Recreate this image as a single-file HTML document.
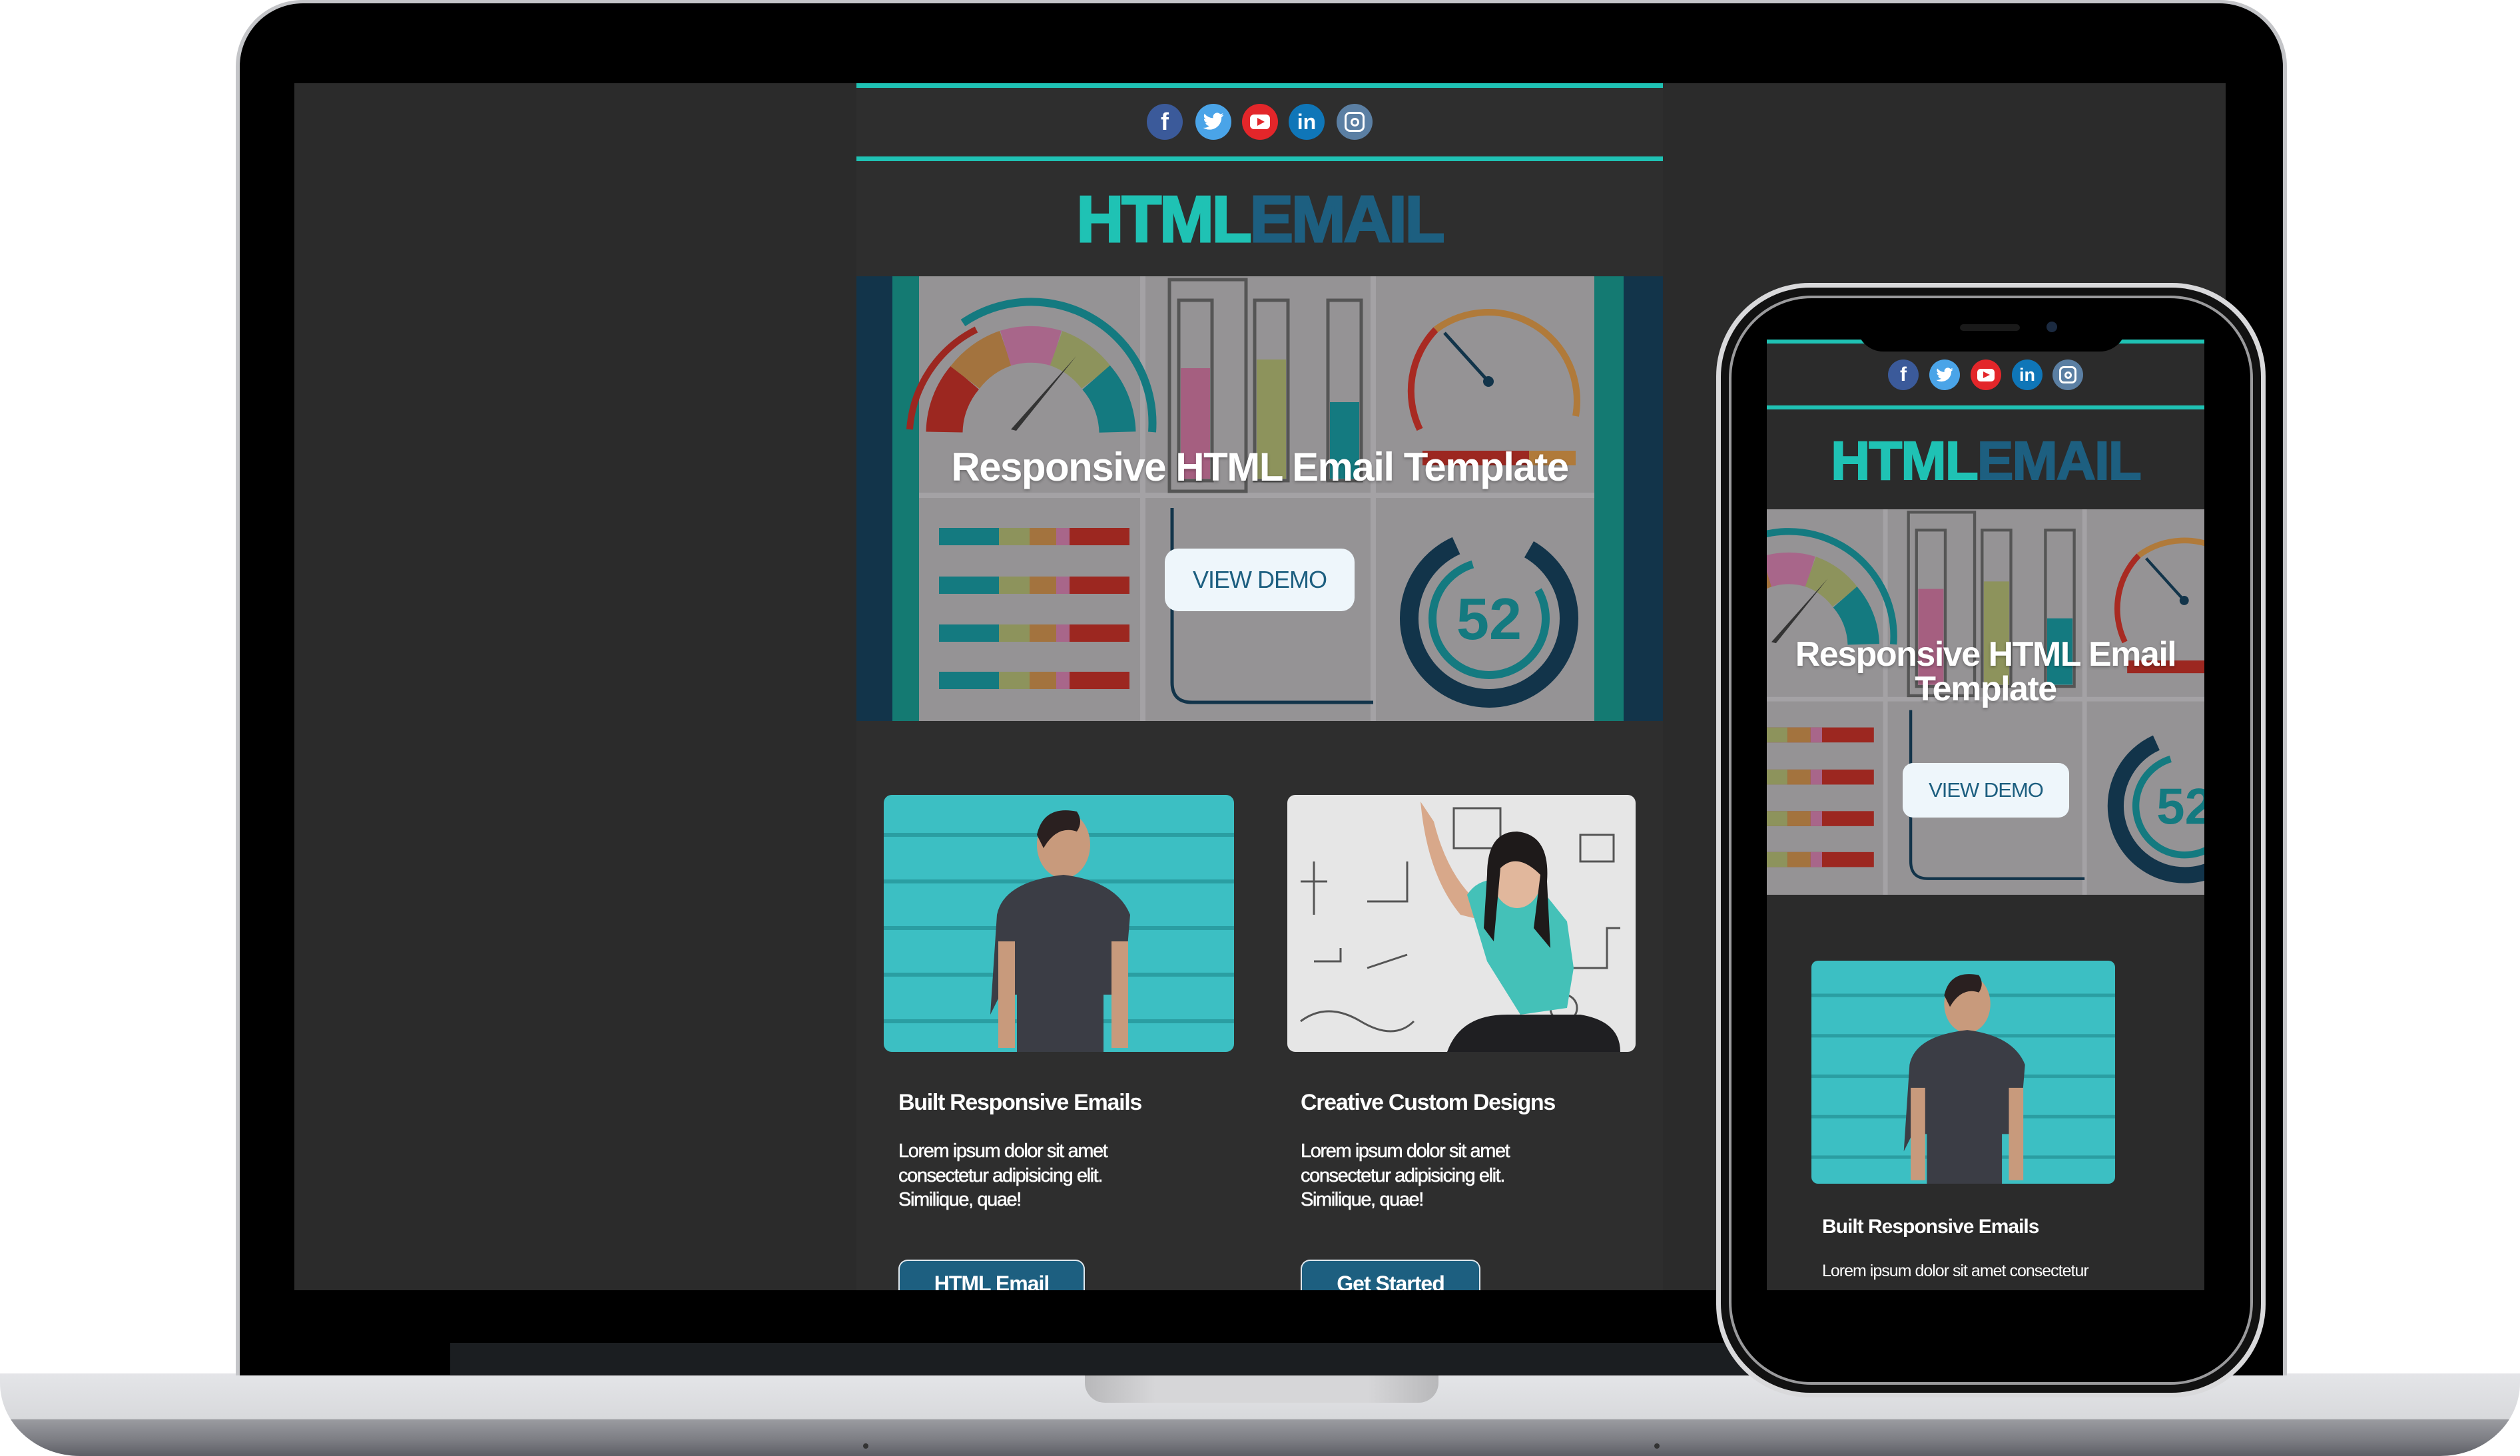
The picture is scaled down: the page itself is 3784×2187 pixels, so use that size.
<!DOCTYPE html>
<html><head><meta charset="utf-8">
<style>
*{margin:0;padding:0;box-sizing:border-box}
html,body{width:3784px;height:2187px;background:#fff;overflow:hidden;font-family:"Liberation Sans",sans-serif}
.abs{position:absolute}
.line{position:absolute;background:#1fc2b4}
.ic{position:absolute;border-radius:50%;color:#fff;font-weight:bold;text-align:center;display:flex;align-items:center;justify-content:center}
.t{color:#fff;font-weight:bold}
</style></head><body>

<!-- laptop base -->
<div class="abs" style="left:0;top:2063px;width:3784px;height:124px;border-radius:0 0 120px 120px/0 0 110px 110px;background:linear-gradient(#e4e5e8 0,#d8d9dc 55%,#9a9ba0 56%,#7d7e84 80%,#5e5f66 100%)"></div>
<div class="abs" style="left:1629px;top:2063px;width:531px;height:44px;border-radius:0 0 30px 30px;background:linear-gradient(90deg,#b8b8ba,#d6d6d8 20%,#d6d6d8 80%,#b8b8ba)"></div>
<div class="abs" style="left:1296px;top:2168px;width:8px;height:8px;border-radius:50%;background:#333"></div>
<div class="abs" style="left:2484px;top:2168px;width:8px;height:8px;border-radius:50%;background:#333"></div>

<!-- laptop lid -->
<div class="abs" style="left:354px;top:0;width:3080px;height:2066px;border-radius:100px 100px 0 0;background:#c4c5c8"></div>
<div class="abs" style="left:360px;top:5px;width:3068px;height:2061px;border-radius:95px 95px 0 0;background:#000"></div>
<div class="abs" style="left:676px;top:2017px;width:2437px;height:48px;background:#1b1e21"></div>

<!-- screen -->
<div class="abs" style="left:442px;top:125px;width:2900px;height:1813px;background:#2b2b2b;overflow:hidden">
  <div class="abs" style="left:844px;top:0;width:1211px;height:1813px;background:#2e2e2e">
    <div class="line" style="left:0;top:0;width:1211px;height:7px"></div>
    <div class="line" style="left:0;top:110px;width:1211px;height:7px"></div>
    <div class="ic" style="left:436px;top:31px;width:54px;height:54px;background:#3b5a9a;font-size:36px">f</div>
    <div class="ic" style="left:509px;top:31px;width:54px;height:54px;background:#4aa4e8;font-size:30px">
      <svg width="34" height="28" viewBox="0 0 24 20"><path d="M23 2.5c-.8.4-1.7.6-2.6.7a4.5 4.5 0 0 0 2-2.5c-.9.5-1.9.9-2.9 1.1A4.5 4.5 0 0 0 11.8 6 12.8 12.8 0 0 1 2.5 1.3a4.5 4.5 0 0 0 1.4 6 4.5 4.5 0 0 1-2-.6 4.5 4.5 0 0 0 3.6 4.5 4.5 4.5 0 0 1-2 .1 4.5 4.5 0 0 0 4.2 3.1A9 9 0 0 1 1 16.3 12.8 12.8 0 0 0 20.7 5.5V5c.9-.6 1.7-1.4 2.3-2.5z" fill="#fff"/></svg></div>
    <div class="ic" style="left:579px;top:31px;width:54px;height:54px;background:#e3262a"><div style="width:30px;height:22px;background:#fff;border-radius:6px;position:relative"><div style="position:absolute;left:11px;top:5px;border-left:11px solid #e3262a;border-top:6px solid transparent;border-bottom:6px solid transparent"></div></div></div>
    <div class="ic" style="left:649px;top:31px;width:54px;height:54px;background:#0f76b8;font-size:32px">in</div>
    <div class="ic" style="left:721px;top:31px;width:54px;height:54px;background:#5b7fa3"><div style="width:30px;height:30px;border:3px solid #fff;border-radius:8px;display:flex;align-items:center;justify-content:center"><div style="width:13px;height:13px;border:3px solid #fff;border-radius:50%"></div></div></div>
    <div class="abs" style="left:0;top:149px;width:1211px;text-align:center;font-size:98px;font-weight:900;letter-spacing:-3px;line-height:110px;-webkit-text-stroke:3px"><span style="color:#1fc2b4">HTML</span><span style="color:#1d5f80">EMAIL</span></div>
    <!-- hero -->
    <div class="abs" style="left:0;top:290px;width:1211px;height:668px">
      <svg width="1211" height="668" viewBox="0 0 1211 668" style="position:absolute;left:0;top:0">
        <g id="hero">
        <rect width="1211" height="668" fill="#959395"/>
        <rect x="0" width="54" height="668" fill="#12344a"/><rect x="54" width="40" height="668" fill="#147a72"/>
        <rect x="1108" width="44" height="668" fill="#147a72"/><rect x="1152" width="59" height="668" fill="#12344a"/>
        <g stroke="#a4a2a5" stroke-width="8"><line x1="430" y1="0" x2="430" y2="668"/><line x1="776" y1="0" x2="776" y2="668"/><line x1="94" y1="329" x2="1108" y2="329"/></g>
        <g fill="none" stroke-width="55">
          <path d="M132 234 A130 130 0 0 1 163 152" stroke="#9c2720"/>
          <path d="M163 152 A130 130 0 0 1 224 108" stroke="#a3733e"/>
          <path d="M224 108 A130 130 0 0 1 300 108" stroke="#a8668a"/>
          <path d="M300 108 A130 130 0 0 1 360 152" stroke="#8d935c"/>
          <path d="M360 152 A130 130 0 0 1 392 234" stroke="#147a80"/>
        </g>
        <path d="M80 230 A182 182 0 0 1 180 80" fill="none" stroke="#9c2720" stroke-width="10"/>
        <path d="M160 70 A182 182 0 0 1 444 234" fill="none" stroke="#147a80" stroke-width="12"/>
        <path d="M232 230 L330 120 L240 232z" fill="#333"/>
        <g stroke="#555" stroke-width="5" fill="none"><rect x="484" y="36" width="50" height="271"/><rect x="598" y="36" width="50" height="271"/><rect x="708" y="36" width="50" height="271"/><rect x="470" y="5" width="115" height="318"/></g>
        <rect x="487" y="138" width="44" height="166" fill="#a55f80"/>
        <rect x="601" y="125" width="44" height="179" fill="#8d935c"/>
        <rect x="711" y="189" width="44" height="115" fill="#147a80"/>
        <path d="M846 230 A133 133 0 0 1 870 80" fill="none" stroke="#a82a22" stroke-width="10"/>
        <path d="M870 80 A133 133 0 0 1 1080 210" fill="none" stroke="#b07a3a" stroke-width="10"/>
        <line x1="883" y1="85" x2="949" y2="158" stroke="#12344a" stroke-width="5"/><circle cx="949" cy="158" r="8" fill="#12344a"/>
        <rect x="850" y="262" width="230" height="22" fill="#9c2720"/><rect x="1010" y="262" width="70" height="22" fill="#b07a3a"/>
        <g>
          <g id="bar"><rect x="124" y="378" width="286" height="26" fill="#9c2720"/><rect x="124" y="378" width="90" height="26" fill="#147a80"/><rect x="214" y="378" width="46" height="26" fill="#8d935c"/><rect x="260" y="378" width="40" height="26" fill="#a3733e"/><rect x="300" y="378" width="20" height="26" fill="#a8668a"/></g>
          <use href="#bar" y="73"/><use href="#bar" y="145"/><use href="#bar" y="216"/>
        </g>
        <path d="M474 348 L474 610 Q474 640 504 640 L776 640" fill="none" stroke="#12344a" stroke-width="5"/>
        <circle cx="950" cy="514" r="120" fill="none" stroke="#12344a" stroke-width="28" stroke-dasharray="640 160" transform="rotate(-60 950 514)"/>
        <circle cx="950" cy="514" r="85" fill="none" stroke="#147a80" stroke-width="12" stroke-dasharray="420 120" transform="rotate(-30 950 514)"/>
        <text x="950" y="545" text-anchor="middle" font-family="Liberation Sans" font-weight="bold" font-size="88" fill="#147a80">52</text>
        </g>
      </svg>
      <div class="abs t" style="left:0;top:252px;width:1211px;text-align:center;font-size:60px;letter-spacing:-1.5px;text-shadow:0 2px 4px rgba(0,0,0,.3)">Responsive HTML Email Template</div>
      <div class="abs" style="left:463px;top:409px;width:285px;height:94px;background:#eef6fb;border-radius:20px;color:#1d5f80;font-size:36px;text-align:center;line-height:94px;letter-spacing:-1px">VIEW DEMO</div>
    </div>
    <!-- cards -->
    <div class="abs" style="left:41px;top:1069px;width:526px;height:386px;border-radius:12px;overflow:hidden;background:#3cbfc3">
      <svg width="526" height="386"><g stroke="#2a9ea2" stroke-width="6"><line x1="0" y1="60" x2="526" y2="60"/><line x1="0" y1="130" x2="526" y2="130"/><line x1="0" y1="200" x2="526" y2="200"/><line x1="0" y1="270" x2="526" y2="270"/><line x1="0" y1="340" x2="526" y2="340"/></g>
      <ellipse cx="270" cy="75" rx="40" ry="50" fill="#c89a7c"/><path d="M230 60 Q240 15 290 25 Q300 40 290 55 Q260 45 240 80z" fill="#2a2020"/>
      <path d="M160 330 L170 180 Q180 130 270 120 Q350 130 370 180 L360 300 L330 300 L330 386 L200 386 L200 300 L175 300z" fill="#3b3d45"/>
      <rect x="172" y="220" width="25" height="160" fill="#c89a7c"/><rect x="342" y="220" width="25" height="160" fill="#c89a7c"/></svg>
    </div>
    <div class="abs" style="left:647px;top:1069px;width:523px;height:386px;border-radius:12px;overflow:hidden;background:#e6e6e6">
      <svg width="523" height="386"><g stroke="#555" stroke-width="3" fill="none"><rect x="250" y="20" width="70" height="60"/><path d="M20 130 L60 130 M40 100 L40 180"/><path d="M120 160 L180 160 L180 100"/><circle cx="415" cy="320" r="20"/><path d="M390 260 L480 260 L480 200 L500 200"/><path d="M40 250 l40 0 l0 -20 M120 260 l60 -20"/><path d="M20 340 q40 -30 90 0 t80 0"/><rect x="440" y="60" width="50" height="40"/><path d="M340 100 l40 40"/></g>
      <path d="M220 40 Q240 120 285 160 L300 190 L260 180 Q210 120 200 10z" fill="#d8a88a"/>
      <path d="M270 150 Q290 120 330 130 L380 140 L420 190 L430 260 L420 320 L350 330 L300 250z" fill="#44c1b8"/>
      <ellipse cx="345" cy="120" rx="38" ry="50" fill="#e1b79c"/><path d="M300 120 Q300 55 345 55 Q395 60 390 130 L395 230 L370 200 L380 120 Q345 85 320 110 L310 220 L295 200z" fill="#1e1a1a"/>
      <path d="M240 386 Q260 330 330 330 L440 330 Q500 340 500 386z" fill="#1f1f22"/></svg>
    </div>
    <div class="abs t" style="left:63px;top:1512px;font-size:34px;letter-spacing:-1.3px">Built Responsive Emails</div>
    <div class="abs t" style="left:667px;top:1512px;font-size:34px;letter-spacing:-1.3px">Creative Custom Designs</div>
    <div class="abs" style="left:63px;top:1586px;color:#fff;font-size:29px;line-height:36.5px;letter-spacing:-1.4px;-webkit-text-stroke:0.5px #fff">Lorem ipsum dolor sit amet<br>consectetur adipisicing elit.<br>Similique, quae!</div>
    <div class="abs" style="left:667px;top:1586px;color:#fff;font-size:29px;line-height:36.5px;letter-spacing:-1.4px;-webkit-text-stroke:0.5px #fff">Lorem ipsum dolor sit amet<br>consectetur adipisicing elit.<br>Similique, quae!</div>
    <div class="abs t" style="left:63px;top:1767px;width:280px;height:80px;background:#1d5f80;border:2px solid #dfe8ee;border-bottom:none;border-radius:14px 14px 0 0;text-align:center;font-size:32px;line-height:68px;letter-spacing:-1px">HTML Email</div>
    <div class="abs t" style="left:667px;top:1767px;width:270px;height:80px;background:#1d5f80;border:2px solid #dfe8ee;border-bottom:none;border-radius:14px 14px 0 0;text-align:center;font-size:32px;line-height:68px;letter-spacing:-1px">Get Started</div>
  </div>
</div>

<!-- phone -->
<div class="abs" style="left:2577px;top:425px;width:825px;height:1674px;border-radius:140px;background:#d9d9db"></div>
<div class="abs" style="left:2584px;top:432px;width:811px;height:1660px;border-radius:134px;background:#111"></div>
<div class="abs" style="left:2596px;top:444px;width:787px;height:1636px;border-radius:124px;background:#9a9a9c"></div>
<div class="abs" style="left:2600px;top:448px;width:779px;height:1628px;border-radius:120px;background:#000"></div>
<div class="abs" style="left:2653px;top:510px;width:657px;height:1428px;background:#2b2b2b;overflow:hidden">
  <div class="line" style="left:0;top:0;width:657px;height:6px"></div>
  <div class="line" style="left:0;top:99px;width:657px;height:6px"></div>
  <div class="ic" style="left:182px;top:30px;width:46px;height:46px;background:#3b5a9a;font-size:30px">f</div>
  <div class="ic" style="left:244px;top:30px;width:46px;height:46px;background:#4aa4e8"><svg width="28" height="23" viewBox="0 0 24 20"><path d="M23 2.5c-.8.4-1.7.6-2.6.7a4.5 4.5 0 0 0 2-2.5c-.9.5-1.9.9-2.9 1.1A4.5 4.5 0 0 0 11.8 6 12.8 12.8 0 0 1 2.5 1.3a4.5 4.5 0 0 0 1.4 6 4.5 4.5 0 0 1-2-.6 4.5 4.5 0 0 0 3.6 4.5 4.5 4.5 0 0 1-2 .1 4.5 4.5 0 0 0 4.2 3.1A9 9 0 0 1 1 16.3 12.8 12.8 0 0 0 20.7 5.5V5c.9-.6 1.7-1.4 2.3-2.5z" fill="#fff"/></svg></div>
  <div class="ic" style="left:306px;top:30px;width:46px;height:46px;background:#e3262a"><div style="width:26px;height:19px;background:#fff;border-radius:5px;position:relative"><div style="position:absolute;left:9px;top:4px;border-left:10px solid #e3262a;border-top:5.5px solid transparent;border-bottom:5.5px solid transparent"></div></div></div>
  <div class="ic" style="left:368px;top:30px;width:46px;height:46px;background:#0f76b8;font-size:27px">in</div>
  <div class="ic" style="left:429px;top:30px;width:46px;height:46px;background:#5b7fa3"><div style="width:26px;height:26px;border:3px solid #fff;border-radius:7px;display:flex;align-items:center;justify-content:center"><div style="width:11px;height:11px;border:3px solid #fff;border-radius:50%"></div></div></div>
  <div class="abs" style="left:0;top:138px;width:657px;text-align:center;font-size:82px;font-weight:900;letter-spacing:-2px;line-height:90px;-webkit-text-stroke:2px"><span style="color:#1fc2b4">HTML</span><span style="color:#1d5f80">EMAIL</span></div>
  <div class="abs" style="left:0;top:255px;width:657px;height:579px">
    <svg width="657" height="579" viewBox="224 0 760 668" preserveAspectRatio="none" style="position:absolute;left:0;top:0"><use href="#hero"/></svg>
    <div class="abs t" style="left:0;top:192px;width:657px;text-align:center;font-size:52px;line-height:52px;letter-spacing:-1.5px;text-shadow:0 2px 4px rgba(0,0,0,.3)">Responsive HTML Email<br>Template</div>
    <div class="abs" style="left:204px;top:381px;width:250px;height:82px;background:#eef6fb;border-radius:16px;color:#1d5f80;font-size:31px;text-align:center;line-height:82px;letter-spacing:-1px">VIEW DEMO</div>
  </div>
  <div class="abs" style="left:67px;top:933px;width:456px;height:335px;border-radius:10px;overflow:hidden;background:#3cbfc3">
    <svg width="456" height="335" viewBox="0 0 526 386" preserveAspectRatio="none"><g stroke="#2a9ea2" stroke-width="6"><line x1="0" y1="60" x2="526" y2="60"/><line x1="0" y1="130" x2="526" y2="130"/><line x1="0" y1="200" x2="526" y2="200"/><line x1="0" y1="270" x2="526" y2="270"/><line x1="0" y1="340" x2="526" y2="340"/></g>
      <ellipse cx="270" cy="75" rx="40" ry="50" fill="#c89a7c"/><path d="M230 60 Q240 15 290 25 Q300 40 290 55 Q260 45 240 80z" fill="#2a2020"/>
      <path d="M160 330 L170 180 Q180 130 270 120 Q350 130 370 180 L360 300 L330 300 L330 386 L200 386 L200 300 L175 300z" fill="#3b3d45"/>
      <rect x="172" y="220" width="25" height="160" fill="#c89a7c"/><rect x="342" y="220" width="25" height="160" fill="#c89a7c"/></svg>
  </div>
  <div class="abs t" style="left:83px;top:1316px;font-size:30px;letter-spacing:-1px">Built Responsive Emails</div>
  <div class="abs" style="left:83px;top:1385px;color:#fff;font-size:25px;letter-spacing:-1px">Lorem ipsum dolor sit amet consectetur</div>
</div>
<!-- notch -->
<div class="abs" style="left:2788px;top:470px;width:405px;height:58px;background:#000;border-radius:0 0 40px 40px"></div>
<div class="abs" style="left:2943px;top:487px;width:90px;height:10px;background:#1a1a1a;border-radius:5px"></div>
<div class="abs" style="left:3073px;top:483px;width:16px;height:16px;background:#1b2a40;border-radius:50%"></div>

</body></html>
